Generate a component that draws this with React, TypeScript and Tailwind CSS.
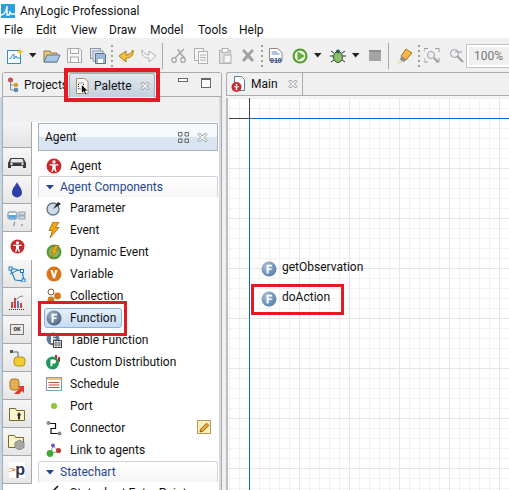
import React from "react";

const Sep = ({ ml }: { ml: string }) => <div className={`w-0.5 h-[26px] border-l border-[#a8a8a8] ${ml}`} />;
const Dots = ({ className }: { className: string }) => (
  <div className={`flex flex-col gap-[3px] ${className}`}>
    {[0, 1, 2, 3, 4].map((i) => (
      <div key={i} className="w-0.5 h-0.5 bg-[#a89f8a]" />
    ))}
  </div>
);
const Caret = ({ className }: { className: string }) => (
  <svg width="8" height="5" viewBox="0 0 8 5" className={`shrink-0 ${className}`}>
    <path d="M0 0h7.5L3.7 4.5z" fill="#222" />
  </svg>
);

const S = ({ w, h = 16, className = "", children }: { w: number; h?: number; className?: string; children: React.ReactNode }) => (
  <svg width={w} height={h} viewBox={`0 0 ${w} ${h}`} className={`shrink-0 ${className}`}>
    {children}
  </svg>
);

const AgentIcon = ({ size = 15 }: { size?: number }) => (
  <svg width={size} height={size} viewBox="0 0 15 15">
    <circle cx="7.5" cy="7.5" r="7" fill="#c9272c" />
    <circle cx="7.5" cy="3.8" r="1.6" fill="#fff" />
    <path d="M3.4 5.8h8.2v1.3H9v2.5l1.1 3.2H8.6L7.5 10l-1.1 2.8H4.9L6 9.6V7.1H3.4z" fill="#fff" />
  </svg>
);

const FIcon = ({ gray = false }: { gray?: boolean }) => (
  <svg width="16" height="16" viewBox="0 0 16 16">
    <defs>
      <radialGradient id={gray ? "fg" : "fb"} cx="0.35" cy="0.3" r="0.8">
        <stop offset="0" stopColor={gray ? "#9fb2c6" : "#a9c1dc"} />
        <stop offset="1" stopColor={gray ? "#47607c" : "#4f7ba8"} />
      </radialGradient>
    </defs>
    <circle cx="8" cy="8" r="7.5" fill={`url(#${gray ? "fg" : "fb"})`} />
    <path d="M5.6 3.8h5.4v1.7H7.6v1.9h3v1.6h-3v3.4h-2z" fill="#fff" />
  </svg>
);

const rows: { label: string; icon: React.ReactNode; extra?: React.ReactNode; selected?: boolean }[] = [
  {
    label: "Parameter",
    icon: (
      <S w={16}>
        <circle cx="7" cy="9" r="6" fill="#cfdbe8" stroke="#66788c" strokeWidth="1.4" />
        <path d="M7 9l5-7 3 2z" fill="#222" />
      </S>
    ),
  },
  {
    label: "Event",
    icon: (
      <S w={16}>
        <path d="M7 0h6L9.5 5.5H13L4 16l2.5-7.5H3z" fill="#f3a712" stroke="#8a5a00" strokeWidth=".7" />
      </S>
    ),
  },
  {
    label: "Dynamic Event",
    icon: (
      <S w={16}>
        <circle cx="8" cy="8" r="7.5" fill="#5f9a3a" />
        <circle cx="8" cy="8" r="5" fill="#8ab868" />
        <path d="M9 1.5h4L9.8 6H12L5 14.5l2-6H5z" fill="#f3a712" stroke="#8a5a00" strokeWidth=".5" />
      </S>
    ),
  },
  {
    label: "Variable",
    icon: (
      <S w={16}>
        <circle cx="8" cy="8" r="7.5" fill="#d9761a" />
        <path d="M4.5 4h2.3L8 9l1.2-5h2.3L9 12.3H7z" fill="#fff" />
      </S>
    ),
  },
  {
    label: "Collection",
    icon: (
      <S w={16}>
        <circle cx="5" cy="4" r="3" fill="#fff" stroke="#8a5a2a" />
        <circle cx="11.5" cy="8" r="3.4" fill="#d9761a" />
        <circle cx="5" cy="12" r="3.4" fill="#d9761a" />
      </S>
    ),
  },
  { label: "Function", icon: <FIcon gray />, selected: true },
  {
    label: "Table Function",
    icon: (
      <S w={16}>
        <circle cx="7" cy="7" r="6.5" fill="#5d7995" />
        <path d="M5 3h5v1.5H7v1.7h2.6v1.4H7V11H5z" fill="#fff" />
        <rect x="7.5" y="8.5" width="8" height="7" fill="#fff" stroke="#444" />
        <path d="M7.5 11h8M7.5 13h8M10 8.5v7M13 8.5v7" stroke="#444" strokeWidth=".7" />
      </S>
    ),
  },
  {
    label: "Custom Distribution",
    icon: (
      <S w={17}>
        <rect x="9" y="1" width="2" height="7" fill="#c9272c" />
        <rect x="12" y="3" width="2" height="5" fill="#c9272c" />
        <circle cx="6.5" cy="9" r="6.5" fill="#1c9a5c" />
        <path d="M4.5 5.5h3.3c3 0 3 4.2 0 4.2H6.3v2.6H4.5z" fill="#fff" />
      </S>
    ),
  },
  {
    label: "Schedule",
    icon: (
      <S w={16}>
        <rect x=".5" y="1.5" width="15" height="13" fill="#fff" stroke="#8a9ab8" />
        <rect x="1" y="2" width="14" height="2" fill="#f2c46c" />
        <path d="M2.5 6.5h11M2.5 9h11M2.5 11.5h11" stroke="#c9443c" />
      </S>
    ),
  },
  {
    label: "Port",
    icon: (
      <S w={16}>
        <circle cx="8" cy="8" r="2.7" fill="#94cc2a" stroke="#6c9c20" strokeWidth=".5" />
      </S>
    ),
  },
  {
    label: "Connector",
    icon: (
      <S w={16}>
        <path d="M3 3.5h6.5v5H5v5h7" fill="none" stroke="#111" strokeWidth="1.2" />
        <circle cx="2.5" cy="3" r="2" fill="#888" />
        <circle cx="13.5" cy="13.5" r="2" fill="#888" />
      </S>
    ),
    extra: (
      <div className="absolute left-[159px] top-[3px] w-[14px] h-[14px] border border-[#b89a50] bg-[#fbeeb8] flex items-center justify-center">
        <svg width="11" height="11" viewBox="0 0 11 11">
          <path d="M1 10l.8-3L7.6 1.2l2.2 2.2L4 9.2z" fill="#f0a830" stroke="#6a4a10" strokeWidth=".8" />
        </svg>
      </div>
    ),
  },
  {
    label: "Link to agents",
    icon: (
      <S w={16}>
        <path d="M4 12L7 4l6 5z" fill="none" stroke="#888" strokeWidth=".8" />
        <circle cx="7" cy="3.5" r="2" fill="#5a5ac8" />
        <circle cx="12.5" cy="8.5" r="2.6" fill="#b83a3a" />
        <circle cx="4" cy="11.5" r="3.4" fill="#3eaa3a" />
      </S>
    ),
  },
];

const Group = ({ label }: { label: string }) => (
  <div className="h-[21px] shrink-0 rounded-t-[3px] border border-b-0 border-[#d0d4da] bg-gradient-to-b from-white to-[#f6f6f6] flex items-center text-[#27468e] pl-[7px] gap-[6px]">
    <svg width="8" height="5" viewBox="0 0 8 5">
      <path d="M0 0h8L4 4.6z" fill="#27468e" />
    </svg>
    <span>{label}</span>
  </div>
);

const sideIcons: React.ReactNode[] = [
  <S w={20}><path d="M1 9l2.5-5h13L19 9v5h-3v-2H4v2H1z" fill="#3a3a3a" /><path d="M4.5 5h11l1.3 3.5H3.2z" fill="#e8e8e8" /><circle cx="4.5" cy="10" r="1.2" fill="#ddd" /><circle cx="15.5" cy="10" r="1.2" fill="#ddd" /></S>,
  <S w={12}><path d="M6 0c1 3 5 6 5 10.500a5 5 0 01-10 0C1 6 5 3 6 0z" fill="#2f3fa8" /></S>,
  <S w={20}><rect x="1" y="2" width="9" height="7" rx="1.500" fill="#fff" stroke="#607890" /><rect x="1.500" y="5" width="8" height="3.500" fill="#5aa8e0" /><rect x="12" y="2" width="6" height="3" fill="#dde" stroke="#708090" strokeWidth=".7" /><rect x="12" y="6" width="6" height="3" fill="#dde" stroke="#708090" strokeWidth=".7" /><path d="M8 12a4 4 0 107 2" fill="none" stroke="#8090a0" strokeWidth="1.200" /></S>,
  <AgentIcon size={15} />,
  <S w={18}><path d="M2 2l12 3 2 10-9-1z" fill="none" stroke="#1b7fc0" strokeWidth="1.200" /><path d="M2 8l8-4" stroke="#1b7fc0" /><rect x="1" y="1" width="3" height="3" fill="#fff" stroke="#1b7fc0" /><rect x="12.500" y="3.500" width="3" height="3" fill="#fff" stroke="#1b7fc0" /><rect x="14" y="13" width="3" height="3" fill="#fff" stroke="#1b7fc0" /></S>,
  <S w={18}><rect x="3" y="8" width="2" height="6" fill="#c94040" /><rect x="6" y="4" width="2" height="10" fill="#c94040" /><rect x="9" y="7" width="2" height="7" fill="#5a7ab0" /><rect x="12" y="9" width="2" height="5" fill="#c94040" /><path d="M3 10c4-1 6-8 12-8" fill="none" stroke="#808080" /><path d="M1 15.500h16" stroke="#333" strokeDasharray="1 1" /></S>,
  <div className="w-[14px] h-[11px] border border-[#777] bg-[#e8e8e8] flex items-center justify-center text-[6px] leading-none text-[#333] font-bold font-['Liberation_Mono',monospace]">OK</div>,
  <S w={17} h={18}><rect x="1" y="1" width="3" height="3" fill="#555" /><path d="M3 3h6v5" fill="none" stroke="#666" /><rect x="5" y="8" width="11" height="9" rx="3" fill="#f2cc2c" stroke="#a08818" strokeWidth=".8" /></S>,
  <S w={18}><rect x="2" y="1" width="9" height="11" rx="3" fill="#e2b050" stroke="#a07820" /><path d="M6 16l6-6-2.500-2H16v7l-2-2-4 4z" fill="#dc3a2a" /></S>,
  <S w={16}><path d="M.5 2.500h6l1 2h8v10H.5z" fill="#fbf4cc" stroke="#7a6a28" /><path d="M10 6l2 3-1 1v3.500H9V10L8 9z" fill="#333" /></S>,
  <S w={18}><path d="M.5 1.500h6l1 2h8v10H.5z" fill="#fbf4cc" stroke="#7a6a28" /><path d="M11.500 6l4.500 2.500v5L11.500 16 7 13.500v-5z" fill="#a8a8a0" stroke="#888" /></S>,
  <div className="w-[16px] h-[16px] bg-white flex items-center justify-end relative">
    <span className="absolute left-0 top-[4px] text-[8px] leading-[8px] text-[#e07020] font-bold">:&gt;</span>
    <span className="text-[16px] leading-[14px] font-bold text-[#2a3550] font-['Liberation_Sans',sans-serif]">p</span>
  </div>,
];

const grid =
  "bg-white bg-[linear-gradient(#e6e6e6_1px,transparent_1px),linear-gradient(90deg,#e6e6e6_1px,transparent_1px),linear-gradient(#f2f2f2_1px,transparent_1px),linear-gradient(90deg,#f2f2f2_1px,transparent_1px)] bg-[size:50px_50px,50px_50px,10px_10px,10px_10px] bg-[position:21px_20px]";

const menu: [string, string][] = [
  ["File", "w-[32px]"],
  ["Edit", "w-[35px]"],
  ["View", "w-[38px]"],
  ["Draw", "w-[41px]"],
  ["Model", "w-[48px]"],
  ["Tools", "w-[41px]"],
  ["Help", "w-[30px]"],
];

export default function App() {
  return (
    <div className="relative w-[509px] h-[490px] overflow-hidden bg-[#f0f0f0] font-['Roboto','Open_Sans',sans-serif] text-[12px] text-[#111] flex flex-col">
      {/* Title bar */}
      <div className="h-[22px] bg-white flex items-center shrink-0 pl-[1px] gap-[5px] text-[12px]">
        <svg width="14" height="14" viewBox="0 0 14 14">
          <rect width="14" height="14" fill="#2b9fe0" />
          <path d="M0 11c3 0 5-2 6-9v9h2l1-3 1 2h4" fill="none" stroke="#fff" strokeWidth="1.400" />
        </svg>
        <span>AnyLogic Professional</span>
      </div>
      {/* Menu bar */}
      <div className="h-[16px] bg-white flex items-center shrink-0 pl-[4px] text-[12px]">
        {menu.map(([m, w]) => (
          <span key={m} className={w}>{m}</span>
        ))}
      </div>
      {/* Toolbar */}
      <div className="h-[34px] shrink-0 bg-[#f0f0f0] flex items-center pt-[1px] pl-[7px]">
        <S w={17}>
          <rect x=".5" y="2.500" width="13" height="13" fill="#fff" stroke="#2b8fd0" />
          <path d="M2 11c3 0 3-5 5-5v5l2-3 1 2h3" fill="none" stroke="#2b8fd0" />
          <path d="M13 0l1 2.500L16.500 4l-2.500 1-1 2.500L12 5 9.500 4 12 2.500z" fill="#f2c830" />
        </S>
        <Caret className="ml-[5px]" />
        <S w={18} className="ml-[6px]">
          <path d="M1 3h6l1 2h6v9H1z" fill="#e8c878" stroke="#8a7a50" />
          <path d="M1 14l3-7h13l-3 7z" fill="#a8c8e8" stroke="#607890" />
        </S>
        <S w={15} className="ml-[6px] opacity-45">
          <path d="M.5.5h12l2 2v12H.5z" fill="#fff" stroke="#555" />
          <rect x="3.500" y=".5" width="8" height="5" fill="#fff" stroke="#555" />
          <rect x="3.500" y="9" width="8" height="5.500" fill="#fff" stroke="#555" />
        </S>
        <S w={16} className="ml-[8px]">
          <rect x=".5" y=".5" width="10" height="10" fill="#dfe6ee" stroke="#8a99a8" />
          <rect x="3" y="3" width="10" height="10" fill="#dfe6ee" stroke="#8a99a8" />
          <path d="M5.500 5.500h9l1 1v9h-10z" fill="#9cb8d4" stroke="#5a7088" />
          <rect x="8" y="11" width="5" height="4" fill="#fff" />
        </S>
        <Dots className="ml-[5px]" />
        <S w={16} className="ml-[5px]">
          <path d="M15 2c1 5-2 8-7 8v4L1 8l7-5v4c3 0 5-2 7-5z" fill="#f3c23c" stroke="#a87818" />
        </S>
        <S w={16} className="ml-[7px] opacity-40">
          <path d="M1 2c-1 5 2 8 7 8v4l7-6-7-5v4C5 7 3 5 1 2z" fill="#fff" stroke="#555" />
        </S>
        <Sep ml="ml-[5px]" />
        <S w={15} className="ml-[8px] opacity-50">
          <path d="M13 1L4 10M7 1c1 3 3 6 7 9" fill="none" stroke="#556" strokeWidth="1.400" />
          <circle cx="3" cy="12" r="2.300" fill="none" stroke="#555" strokeWidth="1.200" />
          <circle cx="12" cy="12" r="2.300" fill="none" stroke="#555" strokeWidth="1.200" />
        </S>
        <S w={15} className="ml-[8px] opacity-40">
          <rect x=".5" y=".5" width="9" height="12" fill="#fff" stroke="#555" />
          <rect x="4.500" y="3.500" width="9" height="12" fill="#fff" stroke="#555" />
          <path d="M6 7h6M6 9.500h6M6 12h6" stroke="#555" />
        </S>
        <S w={15} className="ml-[9px] opacity-40">
          <rect x="1.500" y="2.500" width="11" height="13" fill="#ccc" stroke="#555" />
          <rect x="4" y="0.500" width="6" height="4" fill="#fff" stroke="#555" />
          <rect x="6" y="7" width="7" height="8" fill="#fff" stroke="#555" />
        </S>
        <S w={14} className="ml-[8px] opacity-50">
          <path d="M1 3l2-2 4 4 4-4 2 2-4 4 4 5-2 2-4-4-4 4-2-2 4-5z" fill="#555" />
        </S>
        <Dots className="ml-[6px]" />
        <S w={14} className="ml-[6px]">
          <path d="M.5.5h8l4.500 4v8H.5z" fill="#fff" stroke="#8a8a80" />
          <path d="M2.500 4h6M2.500 6h8" stroke="#5a88c0" />
          <text x="1" y="14.500" fontSize="7" fontWeight="700" fill="#203880" fontFamily="Liberation Sans">010</text>
        </S>
        <S w={16} className="ml-[9px]">
          <circle cx="8" cy="8" r="7.500" fill="#4f9a2f" />
          <circle cx="8" cy="8" r="5.500" fill="#eaf4df" />
          <path d="M5.500 3.500L13 8l-7.500 4.500z" fill="#5fae35" />
        </S>
        <Caret className="ml-[6px]" />
        <S w={16} className="ml-[8px]">
          <path d="M1 3l3 2M15 3l-3 2M0 8h3M16 8h-3M1 14l3-2M15 14l-3-2" stroke="#1f3a30" />
          <ellipse cx="8" cy="9" rx="4.500" ry="5.500" fill="#8cc068" stroke="#2f5a30" />
          <circle cx="8" cy="3.500" r="2" fill="#2f5a50" />
        </S>
        <Caret className="ml-[6px]" />
        <div className="ml-[9px] w-[12px] h-[11px] shrink-0 bg-[#a4a4a4] border-t-2 border-[#8c8c8c]" />
        <Sep ml="ml-[7px]" />
        <S w={17} className="ml-[7px]">
          <path d="M10 1l6 4-6 7-5-4z" fill="#f3b64c" stroke="#a87818" />
          <path d="M5 8l5 4-2 2-4-2z" fill="#8c8c8c" />
          <path d="M4 12l4 2-7 2z" fill="#e8d8a8" />
        </S>
        <Dots className="ml-[5px]" />
        <S w={16} className="ml-[4px] opacity-60">
          <path d="M0 4V.5h4M11 .5h4V4M15 10v4h-3M0 10v4h4" fill="none" stroke="#666" />
          <circle cx="7" cy="7" r="3.500" fill="#eef" stroke="#666" />
          <path d="M10 10l4 4" stroke="#666" strokeWidth="2" />
        </S>
        <S w={16} className="ml-[9px] opacity-60">
          <circle cx="5.500" cy="5.500" r="4" fill="#eef" stroke="#666" />
          <path d="M8 8l6 6" stroke="#666" strokeWidth="2" />
          <path d="M6 4h7" stroke="#666" />
        </S>
        <div className="ml-[2px] w-[50px] h-[22px] shrink-0 border-2 border-r-0 border-white outline outline-1 outline-[#c4c4c4] bg-[#f0f0f0] text-[#777] flex items-center pl-[5px]">100%</div>
      </div>
      {/* Workbench */}
      <div className="flex-1 min-h-0 flex pl-[2px] relative">
        <div className="absolute left-0 top-[25px] bottom-0 w-[2px] bg-[#c8d6e4]" />
        {/* Left view */}
        <div className="w-[220px] shrink-0 flex flex-col border border-b-0 border-[#acacac] rounded-t-[3px] bg-white">
          <div className="h-[24px] shrink-0 flex items-stretch bg-[#f0f0f0] border-b border-[#acacac] relative">
            <div className="flex items-center pl-[3px] gap-[3px] w-[66px] overflow-hidden">
              <S w={14} h={16} className="ml-[1px]">
                <circle cx="3.500" cy="3" r="2.500" fill="#d04a4a" />
                <path d="M3.500 3v10h4M3.500 8h4" fill="none" stroke="#888" />
                <circle cx="9" cy="8" r="2.300" fill="#d9a032" />
                <circle cx="9" cy="13" r="2.300" fill="#5a8ab0" />
              </S>
              <span>Projects</span>
            </div>
            <div className="w-[86px] -mb-px border-x border-t border-[#acacac] rounded-t-[3px] bg-gradient-to-b from-[#e2e8ef] to-[#c3d0dd] flex items-center pl-[6px] relative">
              <S w={13}>
                <path d="M.5.5h8l3.500 3v12H.5z" fill="#fff" stroke="#a89060" />
                <rect x="2.500" y="5" width="5" height="6" fill="none" stroke="#333" strokeDasharray="1 1" />
              </S>
              <svg width="8" height="12" viewBox="0 0 8 12" className="absolute left-[11px] top-[10px]">
                <path d="M.5.500v9l2.200-2 1.600 3.500 1.500-.7-1.600-3.400h3z" fill="#111" stroke="#fff" strokeWidth=".6" />
              </svg>
              <span className="ml-[5px]">Palette</span>
              <svg width="10" height="10" viewBox="0 0 10 10" className="ml-[8px]">
                <path d="M1 2.500L2.500 1 5 3.500 7.500 1 9 2.500 6.500 5 9 7.500 7.500 9 5 6.500 2.500 9 1 7.500 3.500 5z" fill="#fff" stroke="#777" strokeWidth=".8" />
              </svg>
            </div>
            <div className="absolute left-[175px] top-[5px] w-[10px] h-[4px] border border-[#666] bg-white" />
            <div className="absolute left-[198px] top-[5px] w-[10px] h-[10px] border border-[#666] border-t-2 bg-white" />
          </div>
          <div className="flex-1 min-h-0 flex bg-white">
            {/* Side tabs */}
            <div className="w-[29px] shrink-0 flex flex-col">
              <div className="h-[25px] shrink-0 bg-[#f0f0f0]" />
              <div className="h-[26px] shrink-0 bg-gradient-to-b from-[#f4f4f4] to-[#e4e4e4] border-b border-r border-[#a8a8a8]" />
              {sideIcons.map((ic, i) => (
                <div
                  key={i}
                  className={
                    i === 3
                      ? "h-[28px] shrink-0 flex items-center justify-center bg-white"
                      : "h-[28px] shrink-0 flex items-center justify-center bg-gradient-to-b from-[#f6f6f6] to-[#e6e6e6] border-b border-r border-[#a8a8a8]"
                  }
                >
                  {ic}
                </div>
              ))}
            </div>
            {/* Palette */}
            <div className="flex-1 min-w-0 pl-[6px] pr-[1px] border-r-2 border-[#d4dbe3] flex flex-col">
              <div className="h-[26px] -ml-[6px] -mr-[1px] shrink-0 bg-[#f0f0f0] border-b border-white" />
              <div className="h-[28px] shrink-0 border border-[#a9b3bd] bg-gradient-to-b from-[#f6f9fc] from-50% to-[#d9e4f2] to-50% flex items-center pl-[6px] relative">
                <span>Agent</span>
                <svg width="11" height="11" viewBox="0 0 11 11" className="absolute left-[139px] top-[8px]">
                  <path d="M.5.500h3.500v3.500H.5zM7 .5h3.500v3.500H7zM.5 7h3.500v3.500H.5zM7 7h3.500v3.500H7z" fill="none" stroke="#666" />
                </svg>
                <svg width="11" height="11" viewBox="0 0 11 11" className="absolute left-[158px] top-[8px]">
                  <path d="M1 2.500L2.500 1 5.500 4 8.500 1 10 2.500 7 5.500 10 8.500 8.500 10 5.500 7 2.500 10 1 8.500 4 5.500z" fill="#fff" stroke="#777" strokeWidth=".8" />
                </svg>
              </div>
              <div className="h-[21px] mt-[4px] shrink-0 flex items-center pl-[8px] gap-[8px]">
                <AgentIcon size={16} />
                <span>Agent</span>
              </div>
              <Group label="Agent Components" />
              {rows.map((r) => (
                <div key={r.label} className="h-[22px] shrink-0 flex items-center pl-[8px] gap-[8px] relative">
                  {r.selected && (
                    <div className="absolute left-[6px] top-[1px] w-[78px] h-[20px] rounded-[3px] border border-[#8fb4dc] bg-gradient-to-b from-[#e6f0fb] to-[#c6dcf4]" />
                  )}
                  <div className="relative w-[16px] flex justify-center">{r.icon}</div>
                  <span className="relative">{r.label}</span>
                  {r.extra}
                </div>
              ))}
              <Group label="Statechart" />
              <div className="h-[22px] shrink-0 flex items-center pl-[8px] gap-[8px]">
                <S w={16}>
                  <path d="M6 7l6-6" stroke="#111" strokeWidth="1.500" />
                </S>
                <span>Statechart Entry Point</span>
              </div>
            </div>
          </div>
        </div>
        {/* Main editor */}
        <div className="ml-[4px] flex-1 min-w-0 flex flex-col bg-[#f5f5f5]">
          <div className="h-[24px] shrink-0 flex bg-[#f0f0f0] border-t border-l border-[#acacac] rounded-tl-[3px] border-b">
            <div className="w-[76px] border-r border-[#acacac] flex items-center pl-[4px] gap-[5px]">
              <svg width="15" height="16" viewBox="0 0 15 16">
                <path d="M3.500.5h7l3 3v11h-10z" fill="#fff" stroke="#5a7aa0" />
                <circle cx="5.500" cy="11" r="5" fill="#c9272c" />
                <circle cx="5.500" cy="8.800" r="1" fill="#fff" />
                <path d="M3 10.300h5v1H6.300v3H4.700v-3H3z" fill="#fff" />
              </svg>
              <span>Main</span>
              <svg width="10" height="10" viewBox="0 0 10 10" className="ml-[5px]">
                <path d="M1 2.500L2.500 1 5 3.500 7.500 1 9 2.500 6.500 5 9 7.500 7.500 9 5 6.500 2.500 9 1 7.500 3.500 5z" fill="#fff" stroke="#777" strokeWidth=".8" />
              </svg>
            </div>
          </div>
          <div className={`mt-[2px] flex-1 min-h-0 relative border-l-2 border-[#bcbcbc] ${grid}`}>
            {/* Origin: dark negative axes, blue positive axes */}
            <div className="absolute left-[1px] top-[20px] w-[20px] h-[1px] bg-[#444]" />
            <div className="absolute left-[21px] top-0 w-[1px] h-[20px] bg-[#444]" />
            <div className="absolute left-[21px] right-0 top-[20px] h-[1px] bg-[#0f66c4]" />
            <div className="absolute left-[21px] top-[20px] bottom-0 w-[1px] bg-[#0f66c4]" />
            <div className="absolute left-[33px] top-[162px] flex items-center gap-[5px]">
              <FIcon />
              <span className="-translate-y-[2px]">getObservation</span>
            </div>
            <div className="absolute left-[33px] top-[192px] flex items-center gap-[5px]">
              <FIcon />
              <span className="-translate-y-[2px]">doAction</span>
            </div>
          </div>
        </div>
      </div>
      {/* Red annotations */}
      <div className="absolute left-[64px] top-[68px] w-[96px] h-[34px] border-4 border-[#e01b24]" />
      <div className="absolute left-[38px] top-[301px] w-[89px] h-[35px] border-[3px] border-[#e01b24]" />
      <div className="absolute left-[251px] top-[284px] w-[93px] h-[31px] border-[3px] border-[#e01b24]" />
    </div>
  );
}
